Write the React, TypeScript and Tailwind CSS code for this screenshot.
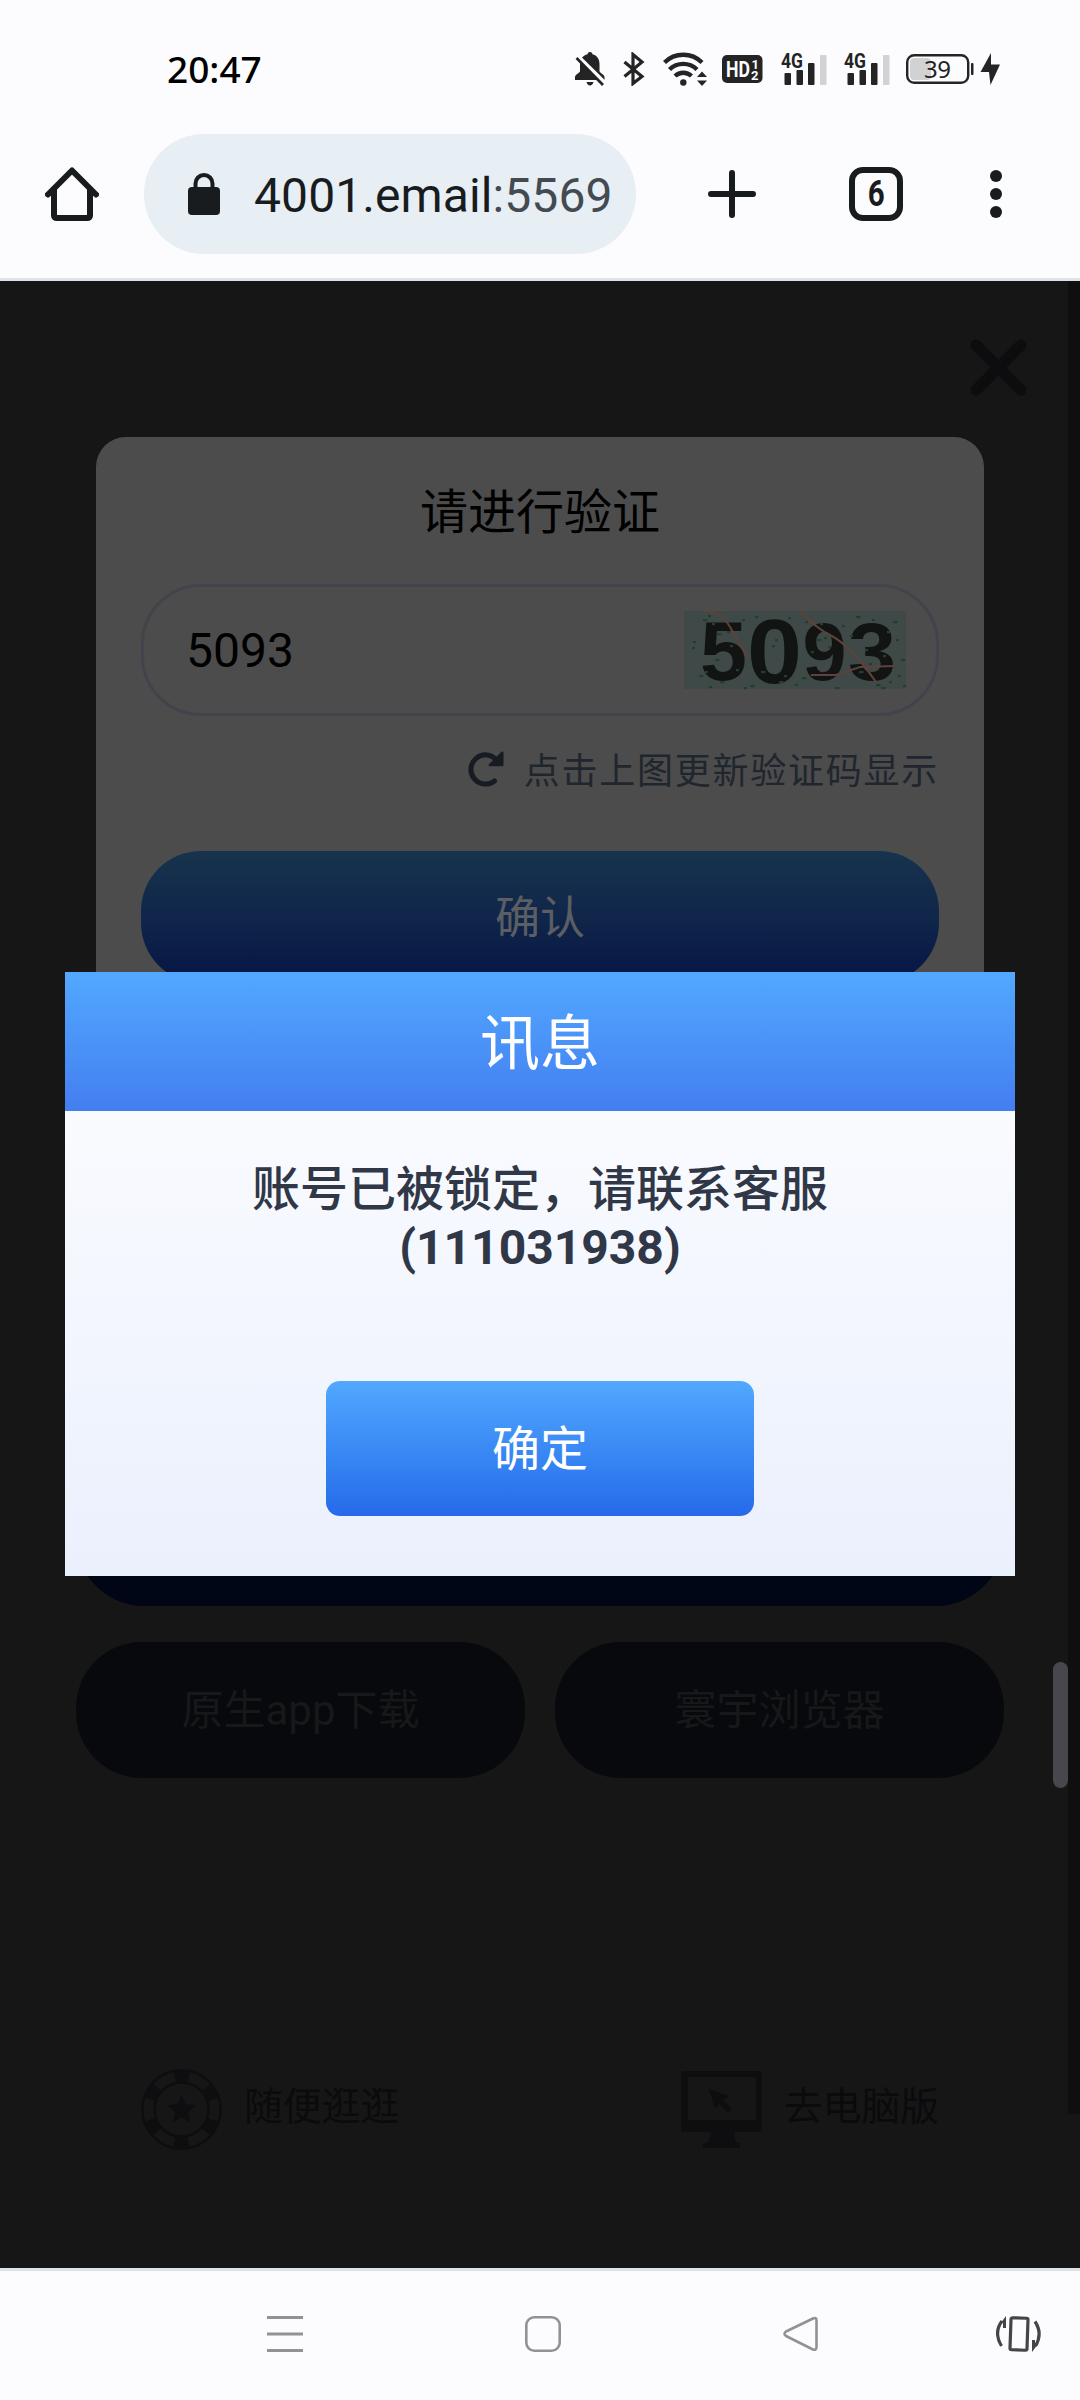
import type { ReactNode } from 'react';

const FONT = "font-[Roboto,'Noto_Sans_CJK_SC',sans-serif]";

const SPECKS = [
  [19, 8], [24, 4], [28, 12], [33, 22], [9, 30], [8, 36], [15, 64], [21, 60], [25, 75], [31, 48], [43, 20], [60, 76], [66, 74],
  [58, 8], [71, 5], [77, 60], [88, 34], [91, 28], [95, 70], [104, 6], [111, 73], [118, 66], [121, 10], [127, 40], [133, 28], [140, 26],
  [144, 35], [151, 76], [158, 14], [166, 24], [172, 5], [181, 38], [188, 8], [192, 73], [199, 44], [205, 70], [209, 10], [212, 28], [214, 64],
  [217, 48], [219, 74], [203, 20], [197, 76], [52, 58], [46, 34], [36, 70], [100, 64], [136, 12], [175, 60], [185, 52],
];

// 状态栏信号格
function Signal() {
  return (
    <svg width="46" height="32" viewBox="0 0 46 32" fill="#242424" className="overflow-visible">
      <text x="0" y="15" fontSize="21" fontWeight="700" textLength="22" lengthAdjust="spacingAndGlyphs">4G</text>
      <rect x="3.5" y="20" width="6.5" height="12" rx="1" />
      <rect x="15.5" y="17" width="6.5" height="15" rx="1" />
      <rect x="27" y="10" width="6.5" height="22" rx="1" />
      <rect x="39" y="2" width="6.5" height="30" rx="1" fill="#d2d2d4" />
    </svg>
  );
}

function StatusBar() {
  return (
    <div className="h-[114px] pt-[45px] pl-[167px] pr-20 flex justify-between items-start">
      <span className="font-['Noto_Sans',sans-serif] font-medium text-[37px] leading-[48px] text-black">20:47</span>
      <div className="flex items-center pt-[7px]">
        {/* 静音 */}
        <svg width="32" height="34" viewBox="0 0 32 34" className="mr-[17px]">
          <path d="M16 0c1.600 0 2.400 1 2.400 2.200C23 3.400 25.500 7 25.500 12v7c0 2 4.500 3 5 6v3H1v-3c.5-3 5-4 5-6v-7C6 7 9 3.400 13.600 2.200 13.600 1 14.400 0 16 0zM12.500 30h7c-.5 2.300-1.800 3.500-3.500 3.500S13 32.300 12.500 30z" fill="#242424" />
          <path d="M4 4.500 31 31" stroke="#fcfcff" strokeWidth="4" />
          <path d="M2.500 6 29 33" stroke="#242424" strokeWidth="2.600" />
        </svg>
        <svg width="22" height="34" viewBox="0 0 22 34" className="mr-[18px]" fill="none" stroke="#242424" strokeWidth="3.200">
          <path d="M1.500 10 19 24.500 10 31.500V2.500L19 10 1.500 24.500" />
        </svg>
        {/* Wi-Fi */}
        <svg width="45" height="34" viewBox="0 0 45 34" className="mr-[14px]" fill="none" stroke="#242424" strokeWidth="4.400">
          <path d="M1.500 10.500a26.500 26.500 0 0 1 37.500 0" />
          <path d="M6.500 17.500a19.500 19.500 0 0 1 27.500 0" />
          <path d="M12 24a12 12 0 0 1 16.500 0" />
          <circle cx="20.300" cy="30.500" r="3.200" fill="#242424" stroke="none" />
          <path d="M34 25h10l-5-5.500zM34 28.500h10l-5 5.500z" fill="#242424" stroke="none" />
        </svg>
        <svg width="41" height="28" viewBox="0 0 41 28" className="mr-[18px] overflow-visible">
          <rect width="40.500" height="28" rx="5" fill="#242424" />
          <text x="4" y="22" fontSize="22" fontWeight="700" fill="#fcfcff" textLength="24" lengthAdjust="spacingAndGlyphs">HD</text>
          <text x="29.500" y="13.500" fontSize="13" fontWeight="700" fill="#fcfcff">1</text>
          <text x="29" y="25" fontSize="13" fontWeight="700" fill="#fcfcff">2</text>
        </svg>
        <div className="mr-[17px]"><Signal /></div>
        <div className="mr-4"><Signal /></div>
        <svg width="68" height="30" viewBox="0 0 68 30" className="mr-1.5 overflow-visible">
          <rect x="4" y="4" width="21" height="22" rx="4" fill="#d2d2d4" />
          <rect x="1.200" y="1.200" width="61" height="27.600" rx="7" fill="none" stroke="#242424" strokeWidth="2.400" />
          <rect x="65" y="9" width="2.500" height="12" rx="1" fill="#242424" />
          <text x="18" y="23.500" fontSize="24" fill="#242424" textLength="27" fontFamily="Noto Sans, sans-serif">39</text>
        </svg>
        <svg width="20" height="32" viewBox="0 0 20 32" fill="#242424">
          <path d="M11 0 .5 19h8.500L10.500 32 20 11.500h-9z" />
        </svg>
      </div>
    </div>
  );
}

function Toolbar() {
  return (
    <div className="h-[167px] pt-5 pl-[45px] flex items-start border-b-[3px] border-[#dde3e8] text-[#191c1e]">
      <div className="h-[120px] flex items-center">
        <svg width="54" height="54" viewBox="0 0 54 54" className="mr-[45px]" fill="none" stroke="#191c1e" strokeWidth="6" strokeLinecap="round" strokeLinejoin="round">
          <path d="M3 27.500 27 3.500 51 27.500" />
          <path d="M9 23v25.500a2.500 2.500 0 0 0 2.500 2.500h31a2.500 2.500 0 0 0 2.500-2.500V23" />
        </svg>
        <div className="w-[492px] h-[120px] rounded-full bg-[#e7eef4] flex items-center pl-11">
          <svg width="32" height="42" viewBox="0 0 32 42" className="mr-[34px]">
            <path d="M7.500 16V10.500a8.500 8.500 0 0 1 17 0V16" fill="none" stroke="#191c1e" strokeWidth="4" />
            <rect y="14" width="32" height="28" rx="4" fill="#191c1e" />
          </svg>
          <span className="text-[48px] tracking-[0.1px] leading-none pt-1">4001.email<span className="text-[#434a51]">:5569</span></span>
        </div>
        <svg width="48" height="48" viewBox="0 0 48 48" className="ml-[72px]" stroke="#191c1e" strokeWidth="6" strokeLinecap="round">
          <path d="M3 24h42M24 3v42" />
        </svg>
        <div className="ml-[93px] w-[54px] h-[54px] rounded-[14px] border-[6px] border-[#191c1e] flex items-center justify-center">
          <span className="text-[36px] font-bold leading-none scale-x-[.82]">6</span>
        </div>
        <div className="ml-[87px] flex flex-col gap-1.5">
          <i className="w-3 h-3 rounded-full bg-[#191c1e]" />
          <i className="w-3 h-3 rounded-full bg-[#191c1e]" />
          <i className="w-3 h-3 rounded-full bg-[#191c1e]" />
        </div>
      </div>
    </div>
  );
}

// 图形验证码
function Captcha() {
  return (
    <svg width="222" height="78" viewBox="0 0 222 78" className="overflow-visible">
      <rect width="222" height="78" fill="#3f4947" />
      <g fill="#111413" fontFamily="Liberation Sans, sans-serif" fontWeight="700">
        <text x="16" y="69" fontSize="83" textLength="47" lengthAdjust="spacingAndGlyphs">5</text>
        <text x="63" y="72" fontSize="90" textLength="55" lengthAdjust="spacingAndGlyphs">0</text>
        <text x="118.500" y="69" fontSize="82" textLength="44" lengthAdjust="spacingAndGlyphs">9</text>
        <text x="164" y="69" fontSize="82" textLength="48" lengthAdjust="spacingAndGlyphs">3</text>
      </g>
      {SPECKS.map(([x, y], i) => (
        <rect key={i} x={x} y={y} width={i % 3 === 0 ? 4.5 : 3} height="2.200" fill="#1f4029" />
      ))}
      <g fill="none" stroke="#5e423b" strokeWidth="2">
        <path d="M22 0c12 0 18 6 24 16s12 20 18 31" />
        <path d="M116 0c8 8 16 17 30 24s30 24 46 47" />
        <path d="M127 64h25l24-8 34-1" />
      </g>
    </svg>
  );
}

function VerifyCard() {
  return (
    <div className="mt-[156px] ml-24 w-[888px] h-[560px] rounded-t-[30px] bg-[#4c4c4c] px-[45px] pt-10 text-black">
      <h2 className="text-[48px] leading-[72px] text-center">请进行验证</h2>
      <div className="mt-[35px] h-[132px] rounded-[60px] border-[3px] border-[#43434c] flex items-center justify-between pl-[42px] pr-[30px]">
        <span className="text-[48px] leading-none pt-0.5">5093</span>
        <Captcha />
      </div>
      <div className="mt-[31px] h-12 flex items-center justify-end text-[#20262e]">
        <svg width="36" height="36" viewBox="0 0 36 36" className="mr-5 mb-1">
          <path d="M28.500 8.800A14.600 14.600 0 1 0 26.500 30" fill="none" stroke="#171c22" strokeWidth="5" strokeLinecap="round" />
          <path d="M33.500.8c1.300-.6 2 .2 2 1.200v12c0 .8-.4 1.200-1.200 1.200H22c-1.500 0-1.800-1.200-1-2z" fill="#171c22" />
        </svg>
        <span className="text-[36px] leading-[48px] tracking-[1.75px] pt-0.5">点击上图更新验证码显示</span>
      </div>
      <div className="mt-14 h-[132px] rounded-[60px] bg-linear-to-b from-[#17334c] via-[#10264a] to-[#081444] text-[#5b5e62] text-[45px] flex items-center justify-center pt-1">
        确认
      </div>
    </div>
  );
}

function PillButton({ children }: { children: ReactNode }) {
  return (
    <div className="w-[449px] h-[136px] rounded-[66px] bg-[#08090c] text-[#16181a] text-[42px] flex items-center justify-center">
      {children}
    </div>
  );
}

function ChipIcon() {
  return (
    <svg width="81" height="81" viewBox="0 0 81 81" fill="none" stroke="#0e0e11">
      <circle cx="40.500" cy="40.500" r="39.200" strokeWidth="2.500" />
      <circle cx="40.500" cy="40.500" r="27" strokeWidth="2.500" />
      <circle cx="40.500" cy="40.500" r="33.500" strokeWidth="12" strokeDasharray="14 21.080" strokeDashoffset="7" transform="rotate(30 40.500 40.500)" />
      <path d="m40.500 26 4.200 9.300 10 1-7.500 6.900 2.100 10-8.800-5.100-8.800 5.100 2.100-10-7.500-6.900 10-1z" fill="#0e0e11" stroke="none" />
    </svg>
  );
}

function MonitorIcon() {
  return (
    <svg width="81" height="78" viewBox="0 0 81 78" fill="#0e0e11">
      <path fillRule="evenodd" d="M3 0h75a3 3 0 0 1 3 3v55a3 3 0 0 1-3 3H53l2 11h4v5H22v-5h5l3-11H3a3 3 0 0 1-3-3V3a3 3 0 0 1 3-3zm4 6v43h68V6z" />
      <path d="m28 18 20 7-6 4 9 9-4 4-9-9-4 5z" />
    </svg>
  );
}

function MessageDialog() {
  return (
    <div className="absolute left-[65px] top-[691px] w-[950px] h-[604px] flex flex-col bg-linear-to-b from-[#fdfeff] to-[#ebf0fd]">
      <div className="h-[139px] flex items-center justify-center pt-1.5 bg-linear-to-b from-[#52a8ff] to-[#447ef0] text-white text-[60px]">
        讯息
      </div>
      <div className="pt-[50px] text-center text-[48px] leading-[58px] text-[#303747]">
        <p className="font-medium">账号已被锁定，请联系客服</p>
        <p className="font-bold">(111031938)</p>
      </div>
      <button className="mt-[104px] mx-auto w-[428px] h-[135px] pt-0.5 rounded-[14px] bg-linear-to-b from-[#52a8ff] to-[#266aea] text-white text-[48px]">
        确定
      </button>
    </div>
  );
}

function NavBar() {
  return (
    <div className="h-[132px] border-t-[3px] border-[#dde3e8] flex items-start pt-[45px] pl-[267px]">
      <svg width="36" height="36" viewBox="0 0 36 36" stroke="#929294" strokeWidth="3">
        <path d="M0 1.500h36M0 18h36M0 34.500h36" />
      </svg>
      <svg width="36" height="36" viewBox="0 0 36 36" className="ml-[222px]">
        <rect x="1.300" y="1.300" width="33.400" height="33.400" rx="8" fill="none" stroke="#929294" strokeWidth="2.600" />
      </svg>
      <svg width="36" height="36" viewBox="0 0 36 36" className="ml-[222px]" fill="none" stroke="#929294" strokeWidth="2.600" strokeLinejoin="round">
        <path d="M30 2.500 3 15.500q-3 2 0 4.500L30 33.500q3.500 1 3.500-2.500V4.500q0-3.500-3.500-2z" />
      </svg>
      <svg width="46" height="36" viewBox="0 0 46 36" className="ml-[177px]" fill="none" stroke="#454547" strokeWidth="3.200">
        <rect x="14.500" y="2" width="17" height="32" rx="1.500" transform="rotate(2 23 18)" />
        <path d="M5.500 30C-.5 20 1.500 11 6 5M39 5.500c6 9 5 17 .5 24.500" />
        <path d="M10 0v12H7V6.500L4 8zM36 36V24h3v5.500l3-1.500z" fill="#454547" stroke="none" />
      </svg>
    </div>
  );
}

export default function App() {
  return (
    <div className={`w-[1080px] h-[2400px] bg-[#fcfcff] overflow-hidden ${FONT}`}>
      <StatusBar />
      <Toolbar />
      <main className="relative h-[1987px] bg-[#161616] overflow-hidden">
        <div className="absolute right-0 top-0 w-3 h-[1833px] bg-[#0f0f0f]" />
        <VerifyCard />
        <div className="mt-[473px] ml-[76px] w-[928px] h-[136px] rounded-full bg-[#000615]" />
        <div className="mt-9 ml-[76px] flex gap-[30px]">
          <PillButton>原生app下载</PillButton>
          <PillButton>寰宇浏览器</PillButton>
        </div>
        <div className="mt-[291px] px-[141px] flex justify-between items-center text-[38.8px] text-[#0a0b0c]">
          <div className="flex items-center gap-[22px]">
            <ChipIcon />
            <span className="pb-1">随便逛逛</span>
          </div>
          <div className="flex items-center gap-[22px]">
            <MonitorIcon />
            <span className="pb-1">去电脑版</span>
          </div>
        </div>

        <svg width="57" height="57" viewBox="0 0 57 57" className="absolute left-[970px] top-[58px]" stroke="#0d0d0f" strokeWidth="11" strokeLinecap="round">
          <path d="m6 6 45 45M51 6 6 51" />
        </svg>
        <div className="absolute left-[1053px] top-[1381px] w-[15px] h-[126px] rounded-full bg-[#47474d]" />
        <MessageDialog />
      </main>
      <NavBar />
    </div>
  );
}
